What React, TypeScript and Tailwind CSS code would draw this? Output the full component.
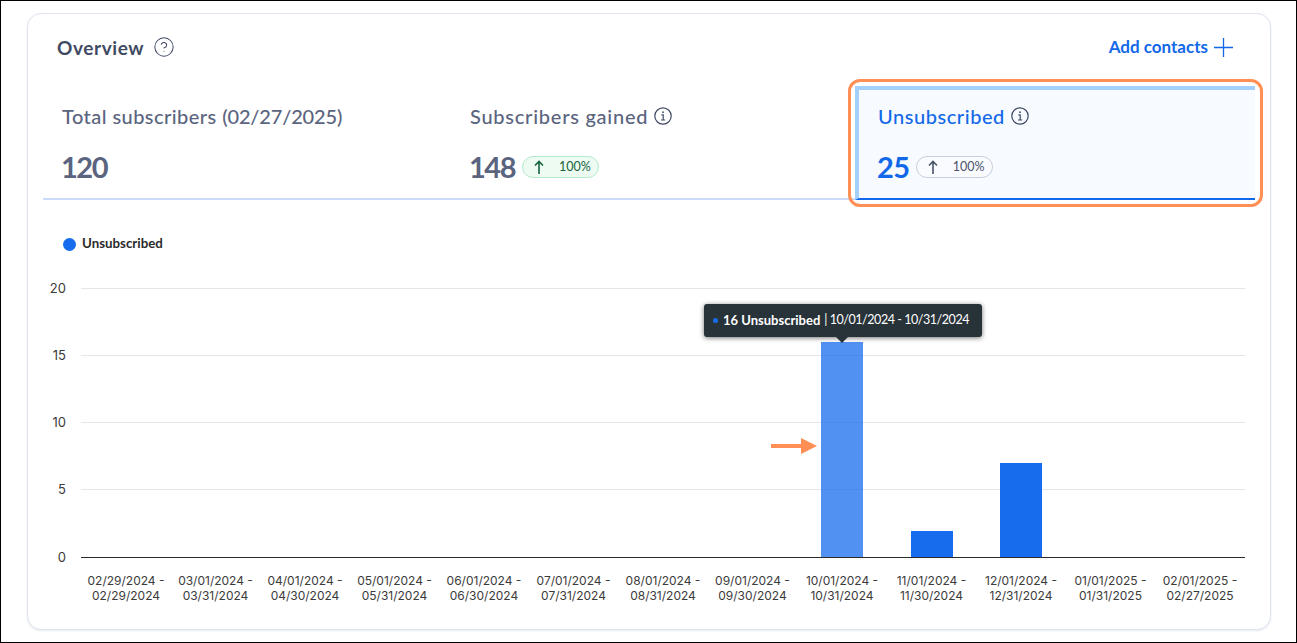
import React from 'react';
import { CircleHelp } from 'lucide-react';

const chartFont = { fontFamily: 'Inter, sans-serif' };

const ticks = [
  { label: '20', y: 288 },
  { label: '15', y: 355 },
  { label: '10', y: 422 },
  { label: '5', y: 489 },
];

const periods = [
  ['02/29/2024 -', '02/29/2024'],
  ['03/01/2024 -', '03/31/2024'],
  ['04/01/2024 -', '04/30/2024'],
  ['05/01/2024 -', '05/31/2024'],
  ['06/01/2024 -', '06/30/2024'],
  ['07/01/2024 -', '07/31/2024'],
  ['08/01/2024 -', '08/31/2024'],
  ['09/01/2024 -', '09/30/2024'],
  ['10/01/2024 -', '10/31/2024'],
  ['11/01/2024 -', '11/30/2024'],
  ['12/01/2024 -', '12/31/2024'],
  ['01/01/2025 -', '01/31/2025'],
  ['02/01/2025 -', '02/27/2025'],
];

// Chart drawing uses page coordinates shifted by the svg's origin
const originX = 44;
const originY = 270;

const Chart: React.FC = () => (
  <svg width="1210" height="340" className="block" style={chartFont}>
    {ticks.map((t) => (
      <g key={t.label}>
        <line x1={81 - originX} x2={1245 - originX} y1={t.y - originY + 0.5} y2={t.y - originY + 0.5} stroke="#e6e6e6" />
        <text x={66 - originX} y={t.y - originY + 5} fontSize="13" fill="#3b3b3b" textAnchor="end">{t.label}</text>
      </g>
    ))}
    <text x={66 - originX} y={557 - originY + 5} fontSize="13" fill="#3b3b3b" textAnchor="end">0</text>
    <rect x={821 - originX} y={342 - originY} width="42" height={215} fill="#176ced" fillOpacity="0.75" />
    <rect x={911 - originX} y={531 - originY} width="42" height={26} fill="#176ced" />
    <rect x={1000 - originX} y={463 - originY} width="42" height={94} fill="#176ced" />
    <line x1={81 - originX} x2={1245 - originX} y1={557 - originY + 0.5} y2={557 - originY + 0.5} stroke="#2b2b2b" />
    {periods.map((p, i) => {
      const cx = 126 + i * 89.5 - originX;
      return (
        <text key={p[0]} fontSize="12" fill="#3b3b3b" textAnchor="middle">
          <tspan x={cx} y={585 - originY}>{p[0]}</tspan>
          <tspan x={cx} y={600 - originY}>{p[1]}</tspan>
        </text>
      );
    })}
  </svg>
);

const InfoIcon: React.FC = () => (
  <svg width="18" height="18" viewBox="0 0 18 18" fill="none" stroke="#3f4a63" strokeWidth="1.2">
    <circle cx="9" cy="9" r="8.2" />
    <path d="M7.4 7.9h1.8v5.1M7 13h4.2" />
    <circle cx="9" cy="5.2" r="0.9" fill="#3f4a63" stroke="none" />
  </svg>
);

const Badge: React.FC<{ tone: 'green' | 'gray' }> = ({ tone }) => (
  <span
    className={
      tone === 'green'
        ? 'flex h-[22px] w-[77px] items-center rounded-full border border-[#b4eccb] bg-[#edfbf3] pl-[11px] text-[#17633c]'
        : 'flex h-[22px] w-[77px] items-center rounded-full border border-[#c9cede] bg-[#f9fbff] pl-[11px] text-[#4a5268]'
    }
  >
    <svg width="10" height="14" viewBox="0 0 10 14" fill="none" stroke="currentColor" strokeWidth="1.6">
      <path d="M5 14V1.5M1 5.5l4-4 4 4" />
    </svg>
    <span className="ml-[15px] text-[12.5px]">100%</span>
  </span>
);

const App: React.FC = () => {
  return (
    <div
      className="h-[643px] w-[1297px] overflow-hidden border border-black bg-white pl-[26px] pr-[25px] pt-[12px]"
      style={{ fontFamily: 'Lato, sans-serif' }}
    >
      <div className="relative h-[617px] rounded-[14px] border border-[#dfe4f0] bg-white shadow-[0_1px_2px_rgba(60,70,110,0.12)]">
        <div className="flex h-[66px] items-center justify-between pl-[29px] pr-[37px]">
          <div className="flex items-center gap-[9px]">
            <span className="mt-[2px] text-[19px] font-bold tracking-[0.6px] text-[#3f4a63]">Overview</span>
            <CircleHelp size={22} strokeWidth={1.1} className="text-[#3f4a63]" />
          </div>
          <div className="flex items-center gap-[6px] text-[#1268e8]">
            <span className="text-[17px] font-bold">Add contacts</span>
            <svg width="19" height="19" viewBox="0 0 19 19" fill="none" stroke="currentColor" strokeWidth="1.3">
              <path d="M0 9.5h19M9.5 0v19" />
            </svg>
          </div>
        </div>

        <div className="ml-[15px] flex h-[120px]">
          <div className="w-[408px] border-b-2 border-[#cbdcfb] pl-[19px] pt-[23px]">
            <div className="flex h-[26px] items-center whitespace-pre text-[20px] font-medium tracking-[0.45px] text-[#5a647e]">
              Total subscribers <span className="tracking-[-0.15px]">(02/27/2025)</span>
            </div>
            <div className="-ml-[1px] mt-[18px] text-[29px] font-bold leading-[40px] tracking-[-1.5px] text-[#5a647e]">120</div>
          </div>
          <div className="w-[404px] border-b-2 border-[#cbdcfb] pl-[19px] pt-[23px]">
            <div className="flex h-[26px] items-center gap-[6px]">
              <span className="text-[20px] font-medium tracking-[0.75px] text-[#5a647e]">Subscribers gained</span>
              <InfoIcon />
            </div>
            <div className="-ml-[1px] mt-[18px] flex items-center gap-[7px]">
              <span className="text-[29px] font-bold leading-[40px] tracking-[-1.5px] text-[#5a647e]">148</span>
              <Badge tone="green" />
            </div>
          </div>
          {/* selected tab, orange frame is the annotation drawn on top */}
          <div className="relative h-[114px] w-[400px] self-end border-b-2 border-l-4 border-t-4 border-b-[#1268e8] border-l-[#a3d0fd] border-t-[#a3d0fd] bg-[#f7fbff] pl-[19px] pt-[13px]">
            <div className="flex h-[26px] items-center gap-[6px]">
              <span className="text-[20px] font-medium tracking-[0.55px] text-[#1268e8]">Unsubscribed</span>
              <InfoIcon />
            </div>
            <div className="-ml-[1px] mt-[18px] flex items-center gap-[6px]">
              <span className="text-[29px] font-bold leading-[40px] tracking-[-0.5px] text-[#1268e8]">25</span>
              <Badge tone="gray" />
            </div>
            <div className="absolute -bottom-[9px] -left-[11px] -right-[8px] -top-[11px] rounded-[12px] border-[3px] border-[#ff8f55]" />
          </div>
        </div>

        <div className="mt-[22px] flex h-[44px] items-center gap-[6px] pl-[35px]">
          <span className="h-[13px] w-[13px] rounded-full bg-[#176ced]" />
          <span className="text-[13.3px] font-bold text-[#2b2b2b]">Unsubscribed</span>
        </div>

        <div className="relative ml-[16px] mt-[4px]">
          <Chart />
          <div className="absolute left-[660px] top-[34px] flex h-[33px] w-[278px] items-center rounded-[3px] bg-[#283239] pl-[9px] text-[12.5px] text-white shadow-[0_1px_5px_rgba(0,0,0,0.55)]">
            <span className="mr-[5px] h-[5px] w-[5px] rounded-full bg-[#176ced]" />
            <span className="text-[13px] font-bold">16 Unsubscribed</span>
            <span className="ml-[4px] tracking-[-0.45px]">| 10/01/2024 - 10/31/2024</span>
            <span className="absolute -bottom-[6px] left-[132px] h-0 w-0 border-x-[6px] border-t-[6px] border-x-transparent border-t-[#283239]" />
          </div>
          {/* orange annotation arrow */}
          <svg width="46" height="16" className="absolute left-[727px] top-[168px]">
            <rect x="0" y="6" width="31" height="4" fill="#ff8f55" />
            <polygon points="30,0 46,8 30,16" fill="#ff8f55" />
          </svg>
        </div>
      </div>
    </div>
  );
};

export default App;
